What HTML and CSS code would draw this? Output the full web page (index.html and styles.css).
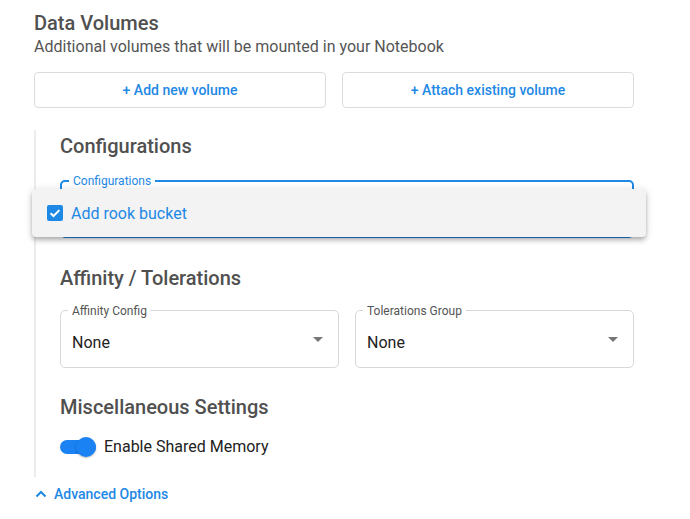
FILE: index.html
```html
<!DOCTYPE html>
<html>
<head>
<meta charset="utf-8">
<link rel="stylesheet" href="styles.css">
</head>
<body>
<div class="page">
  <h2 class="title">Data Volumes</h2>
  <p class="subtitle">Additional volumes that will be mounted in your Notebook</p>
  <div class="btn-row">
    <button class="btn">+ Add new volume</button>
    <button class="btn">+ Attach existing volume</button>
  </div>

  <div class="advanced">
    <h3 class="section-title">Configurations</h3>
    <div class="field focused">
      <span class="field-label">Configurations</span>
      <div class="menu">
        <span class="check">
          <svg width="16" height="16" viewBox="0 0 16 16"><rect x="0" y="0" width="16" height="16" rx="2" fill="#1e88e5"/><path d="M3.6 8.2 L6.5 11 L12.4 5.1" fill="none" stroke="#fff" stroke-width="2"/></svg>
        </span>
        <span class="menu-text">Add rook bucket</span>
      </div>
    </div>

    <h3 class="section-title s2">Affinity / Tolerations</h3>
    <div class="select-row">
      <div class="field select">
        <span class="field-label grey">Affinity Config</span>
        <span class="value">None</span>
        <span class="arrow"></span>
      </div>
      <div class="field select">
        <span class="field-label grey">Tolerations Group</span>
        <span class="value">None</span>
        <span class="arrow"></span>
      </div>
    </div>

    <h3 class="section-title s3">Miscellaneous Settings</h3>
    <div class="toggle-row">
      <span class="toggle"><span class="thumb"></span></span>
      <span class="toggle-text">Enable Shared Memory</span>
    </div>
  </div>

  <div class="adv-link">
    <svg width="12" height="8" viewBox="0 0 12 8"><path d="M1.5 6.5 L6 2 L10.5 6.5" fill="none" stroke="#1e88e5" stroke-width="2"/></svg>
    <span>Advanced Options</span>
  </div>
</div>
</body>
</html>
```

FILE: styles.css
```css
* { box-sizing: border-box; }
html, body { margin: 0; padding: 0; background: #fff; }
body { font-family: Roboto, "Noto Sans", sans-serif; }
.page { width: 600px; margin-left: 34px; padding-top: 11px; }
.title { margin: 0; font-size: 20px; line-height: 24px; font-weight: 500; color: #505050; }
.subtitle { margin: 2px 0 0; font-size: 16px; line-height: 20px; color: #555; }
.btn-row { display: flex; gap: 16px; margin-top: 15px; }
.btn { flex: 1; height: 36px; background: #fff; border: 1px solid #dcdcdc; border-radius: 4px; font-family: Roboto, sans-serif; font-size: 14px; font-weight: 500; color: #1e88e5; padding: 0; }
.advanced { margin-top: 22px; border-left: 2px solid #ececec; padding: 4px 0 21px 24px; }
.section-title { margin: 0; font-size: 20px; line-height: 24px; font-weight: 500; color: #505050; }
.field { position: relative; border: 1px solid #d8d8d8; border-radius: 5px; }
.field.focused { margin-top: 22px; height: 58px; border: 2px solid #1e88e5; }
.field-label { position: absolute; left: 8px; top: -8px; padding: 0 4px; background: #fff; font-size: 12px; line-height: 14px; color: #1e88e5; }
.field.focused .field-label { left: 7px; top: -8px; }
.field-label.grey { color: #555; top: -7px; left: 7px; }
.menu { position: absolute; left: -30px; right: -14px; top: 7px; height: 48px; background: #f3f3f3; border-radius: 4px; box-shadow: 0 2px 4px -1px rgba(0,0,0,.2), 0 4px 5px 0 rgba(0,0,0,.14), 0 1px 10px 0 rgba(0,0,0,.12); display: flex; align-items: center; padding-left: 15px; }
.check { display: flex; width: 16px; height: 16px; }
.menu-text { margin-left: 8px; font-size: 16px; color: #1e88e5; }
.s2 { margin-top: 28px; }
.select-row { display: flex; gap: 16px; margin-top: 20px; }
.select { flex: 1; height: 58px; display: flex; align-items: center; padding: 6px 0 0 11px; }
.value { font-size: 16px; color: #222; }
.arrow { position: absolute; right: 15px; top: 26px; width: 0; height: 0; border-left: 5px solid transparent; border-right: 5px solid transparent; border-top: 5px solid #777; }
.s3 { margin-top: 27px; }
.toggle-row { display: flex; align-items: center; margin-top: 18px; }
.toggle { position: relative; width: 36px; height: 14px; border-radius: 7px; background: #1a82f2; margin-left: 0; }
.thumb { position: absolute; right: 0; top: -3px; width: 20px; height: 20px; border-radius: 50%; background: #1a82f2; box-shadow: 0 1px 2px rgba(0,0,0,.25); }
.toggle-text { margin-left: 8px; font-size: 16px; color: #222; }
.adv-link { display: flex; align-items: center; margin-top: 9px; padding-left: 1px; color: #1e88e5; font-size: 14px; font-weight: 500; }
.adv-link span { margin-left: 7px; }
```
